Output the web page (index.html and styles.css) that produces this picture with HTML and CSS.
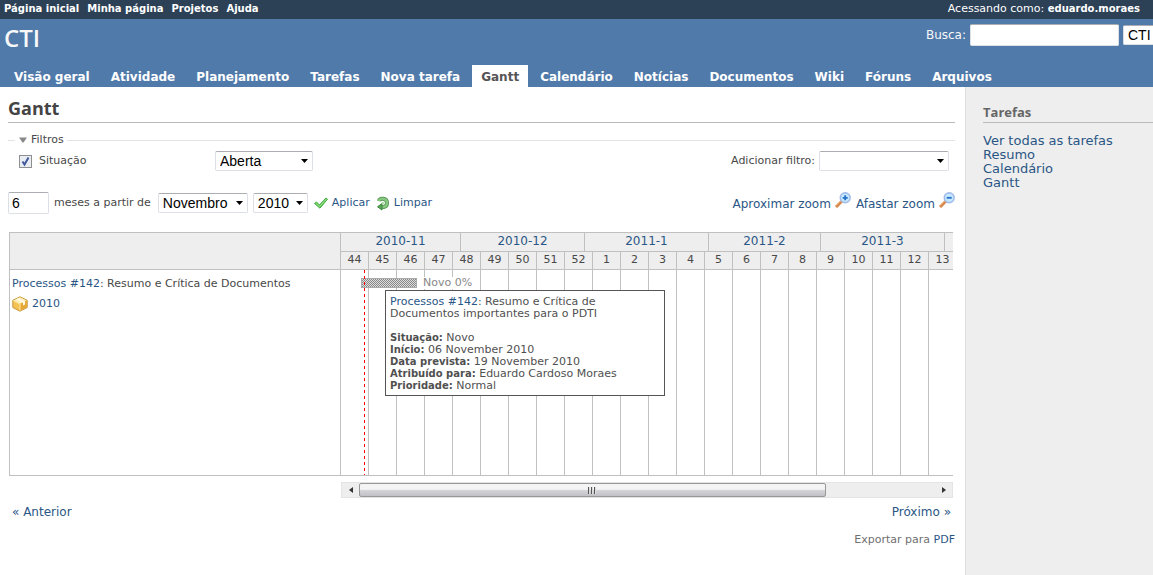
FILE: index.html
```html
<!DOCTYPE html>
<html lang="pt-BR">
<head>
<meta charset="utf-8">
<title>CTI - Gantt</title>
<link rel="stylesheet" href="styles.css">
</head>
<body>
<nav class="top-menu">
  <a href="#">Página inicial</a>
  <a href="#">Minha página</a>
  <a href="#">Projetos</a>
  <a href="#">Ajuda</a>
  <span class="logged-as">Acessando como: <a href="#">eduardo.moraes</a></span>
</nav>
<header class="header">
  <div class="header-row">
    <h1>CTI</h1>
    <form class="quick-search">
      <label for="q">Busca:</label>
      <input id="q" class="field search-field" type="text">
      <select class="field project-jump" aria-label="Projeto"><option>CTI</option></select>
    </form>
  </div>
  <nav class="main-menu">
    <a href="#">Visão geral</a>
    <a href="#">Atividade</a>
    <a href="#">Planejamento</a>
    <a href="#">Tarefas</a>
    <a href="#">Nova tarefa</a>
    <a href="#" class="selected">Gantt</a>
    <a href="#">Calendário</a>
    <a href="#">Notícias</a>
    <a href="#">Documentos</a>
    <a href="#">Wiki</a>
    <a href="#">Fóruns</a>
    <a href="#">Arquivos</a>
  </nav>
</header>
<div class="page">
  <main class="content">
    <h2>Gantt</h2>
    <form>
      <fieldset class="filters">
        <legend><svg width="8" height="6" viewBox="0 0 8 6"><path d="M0 .5h8L4.500 5.500h-1z" fill="#888"/></svg>Filtros</legend>
        <div class="filter-row">
          <input id="f-status" class="check" type="checkbox" checked>
          <label for="f-status" class="filter-name">Situação</label>
          <select class="field drop status" aria-label="Condição"><option>Aberta</option></select>
          <div class="add-filter">
            <label for="add">Adicionar filtro:</label>
            <select id="add" class="field drop add"><option></option></select>
          </div>
        </div>
      </fieldset>
      <div class="period">
        <input id="months" class="field months" type="text" value="6">
        <label for="months">meses a partir de</label>
        <select class="field drop month" aria-label="Mês"><option>Novembro</option></select>
        <select class="field drop year" aria-label="Ano"><option>2010</option></select>
        <a href="#" class="action"><svg width="16" height="16" viewBox="0 0 16 16"><path d="M1.500 8.500 3.500 7l3 3L13 3l1.500 1.200-7.500 9z" fill="#5fc553" stroke="#43ad45" stroke-linejoin="round"/><path d="M3 8.300l3.700 3.200L13.500 4" fill="none" stroke="#a0e58e"/></svg>Aplicar</a>
        <a href="#" class="action"><svg width="16" height="16" viewBox="0 0 16 16"><path d="M4 6C5 2.500 12 3 12 8c0 3.200-2.500 4-5 4" fill="none" stroke="#4a914b" stroke-width="4"/><path d="M4 6C5 2.500 12 3 12 8c0 3.200-2.500 4-5 4" fill="none" stroke="#86c680" stroke-width="2.600"/><path d="M7 8.500v6.500L2.500 11.800z" fill="#5ca55a" stroke="#3d8440"/><circle cx="8" cy="8" r="1.300" fill="#b8dfb1"/></svg>Limpar</a>
        <div class="zoom-links">
          <a href="#">Aproximar zoom <svg width="16" height="16" viewBox="0 0 16 16"><path d="M1 15 7 9" stroke="#d68648" stroke-width="3"/><path d="M.8 13.800 6 8.500" stroke="#f1c395"/><circle cx="10.200" cy="5.800" r="4.900" fill="#c5e9ff" stroke="#a3bbea" stroke-width="1.600"/><path d="M7.700 5.800h5M10.200 3.300v5" stroke="#286fc8" stroke-width="1.800"/></svg></a>
          <a href="#">Afastar zoom <svg width="16" height="16" viewBox="0 0 16 16"><path d="M1 15 7 9" stroke="#d68648" stroke-width="3"/><path d="M.8 13.800 6 8.500" stroke="#f1c395"/><circle cx="10.200" cy="5.800" r="4.900" fill="#c5e9ff" stroke="#a3bbea" stroke-width="1.600"/><path d="M7.700 5.800h5" stroke="#286fc8" stroke-width="1.800"/></svg></a>
        </div>
      </div>
    </form>

    <div class="gantt">
      <section class="subjects">
        <div class="subjects-head"></div>
        <p><a href="#">Processos #142</a>: Resumo e Crítica de Documentos</p>
        <p class="version"><svg width="16" height="16" viewBox="0 0 16 16"><path d="M8 .8l7.200 3.500v7.200L8 15.200.8 11.500V4.300z" fill="#f5c353" stroke="#c6963c" stroke-linejoin="round"/><path d="M1.500 4.500 8 1.300l6.500 3.200L8 7.700z" fill="#fff0bd"/><path d="M8 8v6.600l6.500-3.300V5z" fill="#e6a837"/><path d="M4 3.200l7 3.400v3l2-1V5.500L6 2.200z" fill="#fffbe7"/><path d="M1.300 4.600 8 8v6.500" fill="none" stroke="#ffe9a6"/></svg><a href="#">2010</a></p>
      </section>
      <section class="timeline">
        <div class="months-row">
          <a href="#" class="d30">2010-11</a><a href="#" class="d31">2010-12</a><a href="#" class="d31">2011-1</a><a href="#" class="d28">2011-2</a><a href="#" class="d31">2011-3</a><a href="#" class="d30"></a>
        </div>
        <div class="weeks">
          <span>44</span><span>45</span><span>46</span><span>47</span><span>48</span><span>49</span><span>50</span><span>51</span><span>52</span><span>1</span><span>2</span><span>3</span><span>4</span><span>5</span><span>6</span><span>7</span><span>8</span><span>9</span><span>10</span><span>11</span><span>12</span><span>13</span>
        </div>
        <div class="chart">
          <div class="task-bar"></div>
          <div class="task-status">Novo 0%</div>
          <div class="today"></div>
          <div class="tooltip">
            <p><a href="#">Processos #142</a>: Resumo e Crítica de Documentos importantes para o PDTI</p>
            <ul>
              <li><b>Situação:</b> Novo</li>
              <li><b>Início:</b> 06 November 2010</li>
              <li><b>Data prevista:</b> 19 November 2010</li>
              <li><b>Atribuído para:</b> Eduardo Cardoso Moraes</li>
              <li><b>Prioridade:</b> Normal</li>
            </ul>
          </div>
        </div>
      </section>
      <div class="scrollbar">
        <button type="button" aria-label="Rolar à esquerda"><svg width="4" height="8" viewBox="0 0 4 8"><path d="M4 1v6L0 4z" fill="#333"/></svg></button>
        <div class="track"><div class="thumb"><i></i><i></i><i></i></div></div>
        <button type="button" aria-label="Rolar à direita"><svg width="4" height="8" viewBox="0 0 4 8"><path d="M0 1v6l4-3z" fill="#333"/></svg></button>
      </div>
    </div>
    <nav class="pager"><a href="#">« Anterior</a><a href="#">Próximo »</a></nav>
    <p class="export">Exportar para <a href="#">PDF</a></p>
  </main>
  <aside class="sidebar">
    <h3>Tarefas</h3>
    <a href="#">Ver todas as tarefas</a>
    <a href="#">Resumo</a>
    <a href="#">Calendário</a>
    <a href="#">Gantt</a>
  </aside>
</div>
</body>
</html>
```
FILE: styles.css
```css
* { box-sizing: border-box; }
body {
  margin: 0;
  min-height: 100vh;
  display: flex;
  flex-direction: column;
  font: 12px/14px Verdana, "DejaVu Sans", sans-serif;
  color: #484848;
  background: #fff;
}
a { color: #2a5685; text-decoration: none; }
p, h1, h2, h3, ul { margin: 0; padding: 0; }
ul { list-style: none; }
h1, h2, h3 { font-family: "Trebuchet MS", "Open Sans", sans-serif; font-weight: 700; }

.top-menu {
  display: flex;
  gap: 8px;
  height: 19px;
  padding: 0 13px 0 4px;
  background: #2c4056;
  color: #fff;
  font-size: 11px;
  line-height: 17px;
}
.top-menu a { color: #fff; font-weight: bold; font-size: 10px; }
.logged-as { margin-left: auto; }

.header { background: #507aaa; color: #f8f8f8; }
.header-row { display: flex; justify-content: space-between; height: 46px; padding-left: 4px; }
.header h1 { font-size: 24px; font-weight: 600; line-height: 38px; }
.quick-search { display: flex; align-items: center; gap: 4px; height: 32px; font-size: 12px; }
.main-menu { display: flex; gap: 3px; padding-left: 5px; }
.main-menu a {
  padding: 5px 9px 3px;
  color: #fff;
  font-weight: bold;
  font-size: 12px;
  line-height: 14px;
}
.main-menu .selected { background: #fff; color: #555; }

.field {
  height: 20px;
  margin: 0;
  padding: 0 4px;
  border: 1px solid #dcdfe6;
  border-top-color: #abadb3;
  border-radius: 2px;
  background: #fff;
  color: #000;
  font: 14px Arial, "Liberation Sans", sans-serif;
  appearance: none;
}
.drop {
  background: #fff url("data:image/svg+xml,%3Csvg xmlns='http://www.w3.org/2000/svg' width='7' height='4'%3E%3Cpath d='M0 0h7L3.500 4z'/%3E%3C/svg%3E") no-repeat right 4px center;
}
.search-field { width: 149px; height: 22px; }
.project-jump { width: 30px; padding-right: 0; border-right: 0; border-radius: 2px 0 0 2px; }

.page { flex: 1; display: flex; }
.content { flex: 1; min-width: 0; padding: 0 10px 16px 8px; }
.content h2 {
  padding: 9px 0 2px;
  border-bottom: 1px solid #bbb;
  color: #444;
  font-size: 18px;
  line-height: 24px;
}
.sidebar {
  width: 188px;
  padding: 17px 0 0 17px;
  border-left: 1px solid #ddd;
  background: #eee;
}
.sidebar h3 {
  margin-bottom: 11px;
  padding-bottom: 1px;
  border-bottom: 1px solid #bbb;
  color: #666;
  font-size: 13px;
  line-height: 17px;
}
.sidebar a { display: block; line-height: 14px; font-size: 13px; }

.filters {
  margin: 9px 0 0;
  padding: 3px 6px 0 10px;
  border: 0 solid #e4e4e4;
  border-top-width: 1px;
  font-size: 11px;
}
.filters legend { margin-left: -3px; padding: 0 3px 0 4px; line-height: 16px; }
.filters legend svg { margin-right: 4px; }
.filter-row { display: flex; align-items: center; }
.check {
  appearance: none;
  width: 13px;
  height: 13px;
  margin: 0 7px 0 1px;
  border: 1px solid #8e8f8f;
  background: #e9edf3 url("data:image/svg+xml,%3Csvg xmlns='http://www.w3.org/2000/svg' width='11' height='11'%3E%3Cpath d='M2.500 5.500l2 3 4-7' fill='none' stroke='%23405a9c' stroke-width='2'/%3E%3C/svg%3E");
}
.filter-name { width: 176px; }
.status { width: 98px; }
.add-filter { display: flex; align-items: center; gap: 4px; margin-left: auto; }
.add { width: 130px; }

.period { display: flex; align-items: center; gap: 5px; margin-top: 21px; font-size: 11px; }
.period label { padding-right: 2px; }
.months { width: 41px; height: 22px; padding: 0 3px; }
.month { width: 90px; }
.year { width: 55px; }
.action { display: flex; align-items: center; gap: 3px; }
.zoom-links { display: flex; gap: 5px; margin-left: auto; font-size: 12px; line-height: 24px; height: 22px; }
.zoom-links a { display: flex; gap: 4px; align-items: flex-start; }

.gantt {
  display: grid;
  grid-template-columns: 331px 1fr;
  margin: 18px 2px 0 1px;
  font-size: 11px;
}
.subjects { border: 1px solid #c0c0c0; border-right: 0; }
.subjects-head { height: 37px; margin-bottom: 6px; background: #eee; border-bottom: 1px solid #c0c0c0; }
.subjects p { display: flex; align-items: center; height: 16px; margin: 0 2px 4px; white-space: pre; }
.subjects .version { gap: 4px; }
.timeline { overflow: hidden; border: 1px solid #c0c0c0; border-right: 0; }
.months-row, .weeks { display: flex; background: #eee; border-bottom: 1px solid #c0c0c0; }
.months-row a, .weeks span { flex: none; border-right: 1px solid #c0c0c0; text-align: center; }
.months-row a { height: 18px; font-size: 12px; line-height: 16px; }
.d28 { width: 112px; }
.d30 { width: 120px; }
.d31 { width: 124px; }
.weeks span { width: 28px; height: 17px; line-height: 15px; }
.chart {
  position: relative;
  height: 205px;
  background: repeating-linear-gradient(to right, transparent 0 27px, #c0c0c0 27px 28px);
}
.task-bar {
  position: absolute;
  left: 20px;
  top: 8px;
  width: 56px;
  height: 10px;
  border: 1px solid #aaa;
  background: repeating-conic-gradient(#888 0 25%, #ddd 0 50%) 0 0 / 2px 2px;
}
.task-status { position: absolute; left: 82px; top: 7px; line-height: 12px; color: #888; background: #fff; }
.today { position: absolute; left: 23px; top: 0; bottom: 0; width: 1px; background: repeating-linear-gradient(#f00 0 3px, transparent 3px 6px); }
.tooltip {
  position: absolute;
  left: 44px;
  top: 20px;
  width: 280px;
  padding: 5px 4px 3px;
  border: 1px solid #555;
  background: #fff;
  color: #505050;
  line-height: 12px;
}
.tooltip ul { margin-top: 12px; }
.tooltip li { height: 12px; }
.tooltip b { font-size: 10px; }

.scrollbar {
  grid-column: 2;
  display: flex;
  height: 16px;
  margin: 6px 0 0 1px;
  border: 1px solid #e4e4e4;
  background: #eee;
}
.scrollbar button { display: grid; place-items: center; width: 17px; padding: 0; border: 0; background: none; }
.track { flex: 1; display: flex; }
.thumb {
  flex: 0 1 81%;
  display: flex;
  justify-content: center;
  align-items: center;
  gap: 1px;
  border: 1px solid #979797;
  border-radius: 2px;
  background: linear-gradient(#f4f4f4 0 45%, #d6d6da 50%, #c0c0c6);
}
.thumb i { width: 2px; height: 7px; background: linear-gradient(to right, #555 50%, #ddd 50%); }

.pager { display: flex; justify-content: space-between; margin: 7px 4px 0; font-size: 12px; }
.export { margin-top: 14px; text-align: right; font-size: 11px; color: #707070; }
```
